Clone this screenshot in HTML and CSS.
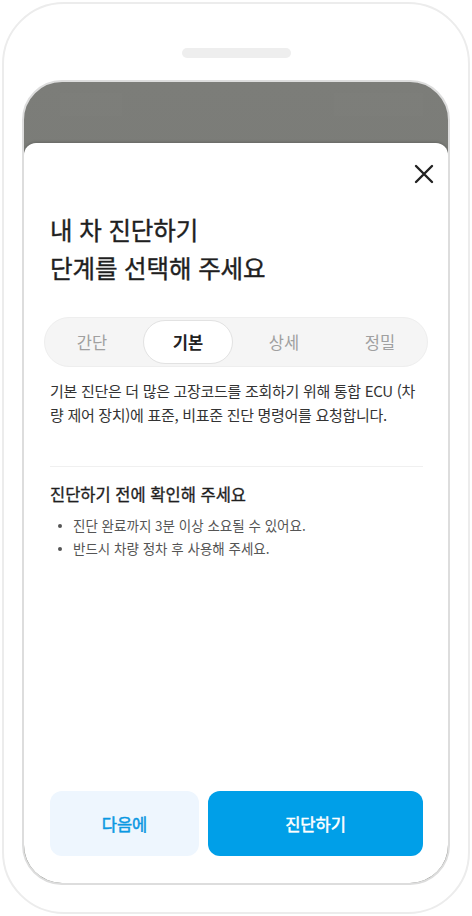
FILE: index.html
```html
<!DOCTYPE html>
<html lang="ko">
<head>
<meta charset="utf-8">
<title>내 차 진단하기</title>
<link rel="stylesheet" href="styles.css">
</head>
<body>
<div class="phone">
  <div class="speaker"></div>
  <div class="screen">
    <div class="statusbar">
      <span class="status-block status-left"></span>
      <span class="status-block status-right"></span>
    </div>
    <div class="sheet">
      <div class="sheet-top">
        <button class="close" type="button" aria-label="닫기">
          <svg width="20" height="20" viewBox="0 0 20 20" aria-hidden="true">
            <path d="M2 2 L18 18 M18 2 L2 18" stroke="#222" stroke-width="2.4" stroke-linecap="round" fill="none"/>
          </svg>
        </button>
      </div>
      <h1 class="title">내 차 진단하기<br>단계를 선택해 주세요</h1>
      <div class="segmented">
        <span class="seg">간단</span>
        <span class="seg seg-active">기본</span>
        <span class="seg">상세</span>
        <span class="seg">정밀</span>
      </div>
      <p class="desc">기본 진단은 더 많은 고장코드를 조회하기 위해 통합 ECU (차<br>량 제어 장치)에 표준, 비표준 진단 명령어를 요청합니다.</p>
      <div class="divider"></div>
      <h2 class="subtitle">진단하기 전에 확인해 주세요</h2>
      <ul class="notes">
        <li>진단 완료까지 3분 이상 소요될 수 있어요.</li>
        <li>반드시 차량 정차 후 사용해 주세요.</li>
      </ul>
      <div class="actions">
        <button class="btn btn-later" type="button">다음에</button>
        <button class="btn btn-primary" type="button">진단하기</button>
      </div>
    </div>
  </div>
</div>
</body>
</html>
```

FILE: styles.css
```css
* { box-sizing: border-box; }

html, body {
  margin: 0;
  padding: 0;
  background: #ffffff;
}

body {
  width: 472px;
  height: 916px;
  overflow: hidden;
  font-family: "Noto Sans CJK KR", "Noto Sans", sans-serif;
  color: #222;
}

.phone {
  margin: 2px;
  width: 468px;
  height: 912px;
  border: 2px solid #ececec;
  border-radius: 62px;
  padding: 0 18px;
  display: flex;
  flex-direction: column;
  align-items: center;
}

.speaker {
  margin-top: 44px;
  width: 109px;
  height: 10px;
  border-radius: 5px;
  background: #eeeeee;
  flex: none;
}

.screen {
  margin-top: 22px;
  width: 428px;
  height: 805px;
  border: 2px solid #dddddd;
  border-radius: 40px;
  overflow: hidden;
  display: flex;
  flex-direction: column;
  background: linear-gradient(180deg, #7c7d79 0%, #72756f 100%);
  flex: none;
}

.statusbar {
  height: 61px;
  flex: none;
  display: flex;
  justify-content: space-between;
  padding: 11px 25px 0 36px;
}

.status-block {
  height: 23px;
  background: rgba(255, 255, 255, 0.012);
}

.status-left { width: 62px; }
.status-right { width: 89px; }

.sheet {
  flex: 1;
  background: #ffffff;
  border-radius: 12px 12px 0 0;
  box-shadow: 0 -1px 3px rgba(0, 0, 0, 0.18);
  display: flex;
  flex-direction: column;
  padding: 0 25px 27px 26px;
}

.sheet-top {
  display: flex;
  justify-content: flex-end;
  padding-top: 19px;
  margin-right: -13px;
}

.close {
  width: 24px;
  height: 24px;
  padding: 0;
  border: 0;
  background: none;
  display: flex;
  align-items: center;
  justify-content: center;
}

.title {
  margin: 25px 0 0;
  font-size: 24.5px;
  line-height: 38px;
  font-weight: 400;
  color: #1f1f1f;
  -webkit-text-stroke: 0.4px #1f1f1f;
  letter-spacing: -0.1px;
}

.segmented {
  margin: 30px -5px 0 -6px;
  height: 50px;
  border: 1px solid #eeeeee;
  background: #f5f5f5;
  border-radius: 25px;
  padding: 2px;
  display: grid;
  grid-template-columns: repeat(4, 1fr);
  column-gap: 6px;
}

.seg {
  display: flex;
  align-items: center;
  justify-content: center;
  font-size: 16.5px;
  color: #a0a0a0;
  border-radius: 22px;
}

.seg-active {
  background: #ffffff;
  border: 1px solid #e2e2e2;
  color: #222;
  font-weight: 700;
}

.desc {
  margin: 12px -6px 0 0;
  font-size: 15px;
  line-height: 24px;
  color: #333;
  letter-spacing: -0.3px;
  white-space: nowrap;
}

.divider {
  margin-top: 39px;
  height: 1px;
  background: #f0f0f0;
}

.subtitle {
  margin: 15px 0 0;
  font-size: 16.5px;
  line-height: 24px;
  font-weight: 400;
  color: #1f1f1f;
  -webkit-text-stroke: 0.35px #1f1f1f;
}

.notes {
  list-style: none;
  margin: 8px 0 0;
  padding: 0;
}

.notes li {
  position: relative;
  padding-left: 23px;
  font-size: 13.5px;
  line-height: 23px;
  color: #555;
}

.notes li::before {
  content: "";
  position: absolute;
  left: 8px;
  top: 10px;
  width: 4px;
  height: 4px;
  border-radius: 50%;
  background: #555;
}

.actions {
  margin-top: auto;
  display: flex;
  gap: 9px;
}

.btn {
  height: 65px;
  border: 0;
  border-radius: 12px;
  font-family: "Noto Sans CJK KR", "Noto Sans", sans-serif;
  font-size: 16.5px;
  font-weight: 400;
  padding: 0;
}

.btn-later {
  flex: 0 0 149px;
  background: #eef6fe;
  color: #0a98e2;
  -webkit-text-stroke: 0.5px #0a98e2;
}

.btn-primary {
  flex: 1;
  background: #009fe8;
  color: #ffffff;
  -webkit-text-stroke: 0.5px #ffffff;
}
```
